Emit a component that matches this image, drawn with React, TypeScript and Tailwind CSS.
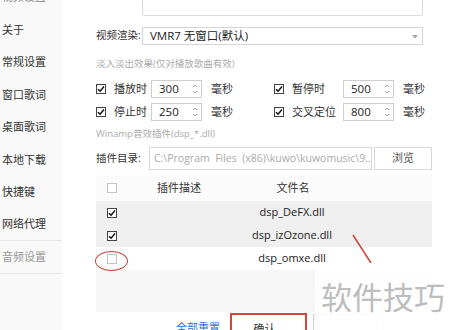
import type { ReactNode } from 'react';

const FONT = "font-['Open_Sans','Noto_Sans_CJK_SC',sans-serif]";

function Check({ checked, light }: { checked?: boolean; light?: boolean }) {
  return (
    <span
      className={
        'flex h-[10px] w-[10px] shrink-0 items-center justify-center border bg-white ' +
        (checked ? 'border-[#444]' : light ? 'border-[#c4c4c4]' : 'border-[#9a9a9a]')
      }
    >
      {checked && (
        <svg width="8" height="8" viewBox="0 0 8 8">
          <path d="M1 4.2 L3.1 6.2 L7 1.6" fill="none" stroke="#111" strokeWidth="1.5" />
        </svg>
      )}
    </span>
  );
}

function Spin() {
  return (
    <svg width="6" height="12" viewBox="0 0 6 12" className="absolute right-[3px] top-1/2 -translate-y-1/2">
      <path d="M1 4 L3 2 L5 4" fill="none" stroke="#9a9a9a" strokeWidth="0.9" />
      <path d="M1 8 L3 10 L5 8" fill="none" stroke="#9a9a9a" strokeWidth="0.9" />
    </svg>
  );
}

function TimeField({ label, value, labelW }: { label: string; value: string; labelW: string }) {
  return (
    <div className="flex items-center">
      <Check checked />
      <span className={'ml-[8px] shrink-0 whitespace-nowrap text-[11px] text-[#333] ' + labelW}>{label}</span>
      <div className="relative flex h-[18px] w-[51px] shrink-0 items-center border border-[#cfcfcf] bg-white pl-[7px] text-[11.5px] text-[#222]">
        {value}
        <Spin />
      </div>
      <span className="ml-[9px] whitespace-nowrap text-[11px] text-[#333]">毫秒</span>
    </div>
  );
}

function Row({ children, bg, h }: { children: ReactNode; bg: string; h: string }) {
  return <div className={'flex shrink-0 items-center ' + bg + ' ' + h}>{children}</div>;
}

export default function App() {
  const menu = ['视频设置', '关于', '常规设置', '窗口歌词', '桌面歌词', '本地下载', '快捷键', '网络代理', '音频设置'];
  const files = [
    { name: 'dsp_DeFX.dll', on: true },
    { name: 'dsp_izOzone.dll', on: true },
    { name: 'dsp_omxe.dll', on: false },
  ];

  return (
    <div className={'relative flex h-[330px] w-[450px] overflow-hidden bg-white ' + FONT}>
      {/* sidebar */}
      <div className="flex w-[62px] shrink-0 flex-col bg-[#f9f9f9]">
        <div className="mt-[-19px]" />
        {menu.map((m, i) => (
          <div
            key={m}
            className={
              'flex h-[32.5px] shrink-0 items-center whitespace-nowrap pl-[2px] text-[11px] ' +
              (i === 8 ? 'text-[#9a9a9a] ' : 'text-[#333] ') +
              (i >= 7 ? 'border-b border-[#e6e6e6]' : '')
            }
          >
            {i === 0 ? <span className="text-[#888]">{m}</span> : m}
          </div>
        ))}
      </div>

      {/* main */}
      <div className="flex min-w-0 flex-1 flex-col pl-[34px]">
        <div className="ml-[46px] mt-[-6px] h-[22px] w-[281px] shrink-0 rounded-[2px] border border-[#dcdcdc]" />

        <div className="mt-[11px] flex h-[18px] shrink-0 items-center">
          <span className="w-[46px] shrink-0 whitespace-nowrap text-[10.5px] text-[#333]">视频渲染:</span>
          <div className="relative flex h-[18px] w-[281px] shrink-0 items-center border border-[#d6d6d6] pl-[7px] text-[11.5px] text-[#222]">
            VMR7 无窗口(默认)
            <svg width="6" height="4" viewBox="0 0 6 4" className="absolute right-[4px] top-[7px]">
              <path d="M0 0 L6 0 L3 3.5 Z" fill="#a8a8a8" />
            </svg>
          </div>
        </div>

        <div className="mt-[12px] h-[14px] shrink-0 whitespace-nowrap text-[9.5px] leading-[14px] text-[#aaa]">
          淡入淡出效果(仅对播放歌曲有效)
        </div>

        <div className="mt-[9px] flex h-[18px] shrink-0 items-center">
          <div className="w-[178px] shrink-0">
            <TimeField label="播放时" value="300" labelW="w-[37px]" />
          </div>
          <TimeField label="暂停时" value="500" labelW="w-[51px]" />
        </div>
        <div className="mt-[5px] flex h-[18px] shrink-0 items-center">
          <div className="w-[178px] shrink-0">
            <TimeField label="停止时" value="250" labelW="w-[37px]" />
          </div>
          <TimeField label="交叉定位" value="800" labelW="w-[51px]" />
        </div>

        <div className="mt-[6px] h-[14px] shrink-0 whitespace-nowrap text-[9.5px] leading-[14px] text-[#aaa]">
          Winamp音效插件(dsp_*.dll)
        </div>

        <div className="mt-[6px] flex h-[23px] shrink-0 items-center">
          <span className="w-[53px] shrink-0 whitespace-nowrap text-[10.5px] text-[#333]">插件目录:</span>
          <div className="flex h-[23px] w-[223px] shrink-0 items-center overflow-hidden whitespace-nowrap border border-[#d9d9d9] pl-[4px] text-[10.5px] text-[#aaa]">
            C:\Program&nbsp; Files&nbsp; (x86)\kuwo\kuwomusic\9...
          </div>
          <div className="ml-[2px] flex h-[23px] w-[58px] shrink-0 items-center justify-center border border-[#d9d9d9] text-[11px] text-[#555]">
            浏览
          </div>
        </div>

        {/* plugin table */}
        <div className="mt-[5px] flex h-[137px] w-[336px] shrink-0 flex-col bg-[#f7f7f7]">
          <Row bg="bg-[#fbfbfb]" h="h-[26px]">
            <div className="w-[61px] shrink-0 pl-[11px]">
              <Check light />
            </div>
            <span className="w-[116px] shrink-0 whitespace-nowrap text-[11px] text-[#333]">插件描述</span>
            <span className="w-[40px] shrink-0 whitespace-nowrap text-center text-[11px] text-[#333]">文件名</span>
          </Row>
          {files.map((f, i) => (
            <Row key={f.name} bg={i < 2 ? 'bg-[#efefef]' : 'bg-white'} h="h-[23px]">
              <div className="w-[61px] shrink-0 pl-[11px]">
                <Check checked={f.on} light />
              </div>
              <div className="w-[271px] shrink-0 pl-[80px] text-[11px] text-[#222]">
                <span className="inline-block w-[110px] text-center">{f.name}</span>
              </div>
            </Row>
          ))}
        </div>

        {/* footer buttons */}
        <div className="flex h-[24px] shrink-0 items-start">
          <span className="ml-[80px] mt-[8px] whitespace-nowrap text-[11px] text-[#2f6fd1]">全部重置</span>
          <div className="ml-[10px] mt-[1px] flex h-[26px] w-[77px] shrink-0 items-center justify-center border-2 border-[#d8423b] bg-white text-[11px] text-[#333]">
            <span className="mr-[8px] mt-[6px]">确认</span>
          </div>
          <div className="ml-[6px] mt-[2px] h-[26px] w-[70px] shrink-0 border border-[#d0d0d0]" />
        </div>
      </div>

      {/* annotations */}
      <div className="absolute left-[95px] top-[251px] h-[20px] w-[33px] rounded-[50%] border-[1.5px] border-[#c9463f]" />
      <svg className="absolute left-0 top-0" width="450" height="330" viewBox="0 0 450 330">
        <line x1="353" y1="235" x2="371" y2="263" stroke="#c9463f" strokeWidth="1.5" />
      </svg>
      <div className="absolute bottom-0 left-[315px] right-0 top-[263px] bg-white/90">
        <div className="ml-[6px] mt-[14px] whitespace-nowrap font-['Noto_Sans_CJK_SC',sans-serif] text-[31px] leading-[38px] text-[#bdbdbd]">
          软件技巧
        </div>
      </div>
    </div>
  );
}
